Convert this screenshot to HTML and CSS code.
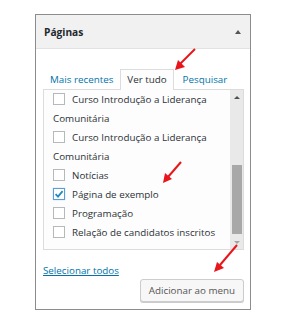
FILE: index.html
```html
<!DOCTYPE html>
<html lang="pt-BR">
<head>
    <meta charset="UTF-8">
    <meta name="viewport" content="width=device-width, initial-scale=1.0">
    <title>Páginas</title>
    <link rel="stylesheet" href="styles.css">
</head>
<body>
    <div class="panel">
        <div class="panel-head">
            <h3>Páginas</h3>
            <span class="toggle"></span>
        </div>
        <div class="panel-body">
            <ul class="tabs">
                <li><a href="#">Mais recentes</a></li>
                <li class="active">Ver tudo</li>
                <li><a href="#">Pesquisar</a></li>
            </ul>
            <div class="list-box">
                <ul class="checklist">
                    <li><label><span class="cb"></span>Curso Introdução a Liderança Comunitária</label></li>
                    <li><label><span class="cb"></span>Curso Introdução a Liderança Comunitária</label></li>
                    <li><label><span class="cb"></span>Notícias</label></li>
                    <li><label><span class="cb checked"><svg viewBox="0 0 12 12" width="12" height="12"><path d="M2.6 6.2 L5 8.6 L9.6 3.2" fill="none" stroke="#1e8cbe" stroke-width="1.8"/></svg></span>Página de exemplo</label></li>
                    <li><label><span class="cb"></span>Programação</label></li>
                    <li><label><span class="cb"></span>Relação de candidatos inscritos</label></li>
                </ul>
                <div class="scrollbar">
                    <span class="sb-arrow up"></span>
                    <div class="sb-track"><div class="sb-thumb"></div></div>
                    <span class="sb-arrow down"></span>
                </div>
            </div>
            <div class="actions">
                <a href="#" class="select-all">Selecionar todos</a>
                <button class="button">Adicionar ao menu</button>
            </div>
        </div>
    </div>

    <svg class="marks" width="291" height="327" viewBox="0 0 291 327">
        <g stroke="#e8161b" stroke-width="2" fill="#e8161b">
            <line x1="195" y1="49" x2="180" y2="64"/>
            <polygon points="175,70 178,60 185,67" stroke="none"/>
            <line x1="181" y1="162" x2="168" y2="177"/>
            <polygon points="163,183 165,173 172,179" stroke="none"/>
            <line x1="237" y1="245" x2="220" y2="265"/>
            <polygon points="214,272 217,262 224,268" stroke="none"/>
        </g>
    </svg>
</body>
</html>
```

FILE: styles.css
```css
body {
    margin: 0;
    background: #fff;
    font-family: "Open Sans", "Noto Sans", sans-serif;
    font-size: 9.8px;
    color: #2c3136;
}
.panel {
    width: 216px;
    height: 296px;
    margin: 14px 0 0 35px;
    box-sizing: border-box;
    border: 1px solid #8c8c8c;
    background: #fff;
}
.panel-head {
    height: 34px;
    box-sizing: border-box;
    display: flex;
    align-items: center;
    justify-content: space-between;
    padding: 0 9px 0 8px;
    background: #f1f1f1;
    border-bottom: 1px solid #e2e2e2;
}
.panel-head h3 {
    margin: 0;
    font-size: 10.2px;
    font-weight: 700;
    color: #23282d;
}
.toggle {
    width: 0;
    height: 0;
    border-left: 3.5px solid transparent;
    border-right: 3.5px solid transparent;
    border-bottom: 4px solid #555;
}
.panel-body {
    padding: 20px 6px 0 7px;
}
.tabs {
    display: flex;
    margin: 0;
    padding: 0;
    list-style: none;
    height: 20px;
}
.tabs li {
    box-sizing: border-box;
    height: 21px;
    padding: 0 6px;
    line-height: 20px;
    border: 1px solid transparent;
    border-bottom: none;
}
.tabs li:last-child {
    padding-left: 8px;
}
.tabs a {
    color: #0073aa;
    text-decoration: none;
}
.tabs li.active {
    background: #fdfdfd;
    border-color: #dcdcdc;
    position: relative;
    z-index: 1;
}
.list-box {
    display: flex;
    height: 161px;
    box-sizing: border-box;
    border: 1px solid #dcdcdc;
    background: #fdfdfd;
}
.checklist {
    flex: 1;
    margin: 0;
    padding: 0 4px 0 9px;
    list-style: none;
    overflow: hidden;
}
.checklist li {
    line-height: 19px;
}
.cb {
    display: inline-block;
    box-sizing: border-box;
    width: 12px;
    height: 12px;
    margin-right: 7px;
    vertical-align: -2px;
    border: 1px solid #b4b9be;
    background: #fff;
}
.cb.checked {
    border-color: #5b9dd9;
    box-shadow: 0 0 1px #8ec0ea;
}
.cb svg {
    display: block;
    margin: -1px;
}
.scrollbar {
    width: 13px;
    display: flex;
    flex-direction: column;
    align-items: center;
    background: #e9e9e9;
}
.sb-arrow {
    width: 0;
    height: 0;
    border-left: 3px solid transparent;
    border-right: 3px solid transparent;
}
.sb-arrow.up {
    margin: 6px 0 4px;
    border-bottom: 3px solid #505050;
}
.sb-arrow.down {
    margin: 4px 0 5px;
    border-top: 3px solid #a3a3a3;
}
.sb-track {
    flex: 1;
    width: 10px;
    padding-top: 62px;
}
.sb-thumb {
    height: 69px;
    background: #a8a8a8;
}
.actions {
    display: flex;
    flex-direction: column;
    align-items: flex-start;
    padding-top: 14px;
}
.select-all {
    color: #0073aa;
    line-height: 14px;
}
.button {
    align-self: flex-end;
    margin-top: 1px;
    height: 23px;
    padding: 0 8px;
    font-family: inherit;
    font-size: 9.8px;
    color: #555;
    background: #f7f7f7;
    border: 1px solid #ccc;
    border-radius: 3px;
    box-shadow: 0 1px 0 #ccc;
}
.marks {
    position: absolute;
    left: 0;
    top: 0;
    pointer-events: none;
}
```
